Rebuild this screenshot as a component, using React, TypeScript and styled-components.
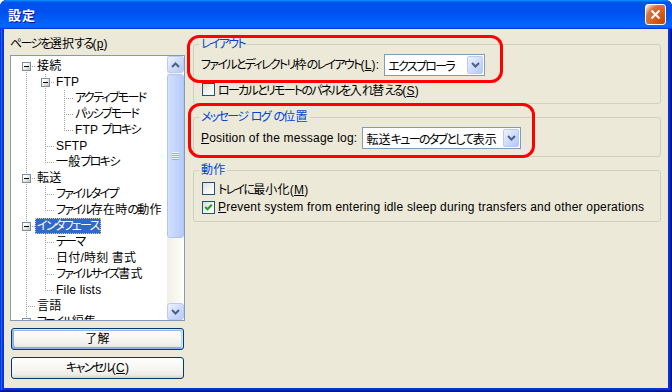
import React from "react";
import styled, { createGlobalStyle, css } from "styled-components";

const GlobalStyle = createGlobalStyle`
  * { box-sizing: border-box; }
  html, body { margin: 0; padding: 0; background: #ffffff; }
  body {
    font-family: "Liberation Sans", "Noto Sans CJK JP", sans-serif;
    font-size: 12px;
    letter-spacing: 0.2px;
    color: #000;
  }
`;

/* ---------- text helpers ---------- */

const Kana = styled.span`
  letter-spacing: -1.7px;
`;

const KANA_RUN = /([\u3040-\u30ff\u31f0-\u31ff]+)/;

function J({ children }: { children: string }) {
  return (
    <>
      {children
        .split(KANA_RUN)
        .map((part, i) => (i % 2 === 1 ? <Kana key={i}>{part}</Kana> : part))}
    </>
  );
}

const Key = styled.span`
  text-decoration: underline;
`;

/* ---------- window chrome ---------- */

const Window = styled.div`
  width: 672px;
  height: 392px;
  display: flex;
  flex-direction: column;
  background: #0831d9;
  border-radius: 7px 7px 0 0;
  overflow: hidden;
  box-shadow: inset -1px -1px #00138c, inset 1px 1px #0831d9,
    inset -2px -2px #001ea0, inset 2px 2px #166aee;
  font-feature-settings: "palt";
`;

const TitleBar = styled.div`
  height: 29px;
  flex: none;
  display: flex;
  align-items: center;
  justify-content: space-between;
  padding: 0 6px 0 8px;
  background: linear-gradient(
    180deg,
    #0997ff,
    #0053ee 8%,
    #0050ee 40%,
    #0066ff 88%,
    #0066ff 93%,
    #005bff 95%,
    #003dd7 96%,
    #003dd7
  );
`;

const Title = styled.span`
  color: #fff;
  font-weight: bold;
  font-size: 13px;
  letter-spacing: 1px;
  text-shadow: 1px 1px 0 #0f1089;
`;

const CloseButton = styled.div`
  width: 21px;
  height: 21px;
  border: 1px solid #fff;
  border-radius: 3px;
  background: radial-gradient(
    circle at 90% 90%,
    #cc4600 0%,
    #dc6527 55%,
    #cd7546 70%,
    #ffccb2 90%,
    #fff 100%
  );
  display: flex;
  align-items: center;
  justify-content: center;
`;

const Client = styled.div`
  flex: 1;
  margin: 0 4px 4px;
  background: #ece9d8;
  position: relative;
  display: flex;
  gap: 8px;
  padding: 7px 7px 0 6px;
`;

/* ---------- left pane ---------- */

const LeftPane = styled.div`
  width: 175px;
  flex: none;
  display: flex;
  flex-direction: column;
`;

const PaneLabel = styled.div`
  height: 16px;
  line-height: 16px;
  white-space: nowrap;
`;

const TreeBox = styled.div`
  margin-top: 3px;
  height: 266px;
  border: 1px solid #7f9db9;
  background: #fff;
  display: flex;
  overflow: hidden;
`;

const TreeList = styled.div`
  flex: 1;
  overflow: hidden;
  padding-top: 2px;
`;

const TreeRow = styled.div`
  height: 16px;
  display: flex;
  padding-left: 6px;
  white-space: nowrap;
`;

type Guide = "pipe" | "blank" | "tee" | "elbow" | "first";

const vDots = `repeating-linear-gradient(to bottom, #a0a0a0 0 1px, transparent 1px 2px)`;
const hDots = `repeating-linear-gradient(to right, #a0a0a0 0 1px, transparent 1px 2px)`;
const vFull = `${vDots} 9px 0 / 1px 16px no-repeat`;
const vTop = `${vDots} 9px 0 / 1px 8px no-repeat`;
const vBottom = `${vDots} 9px 8px / 1px 8px no-repeat`;
const hRight = `${hDots} 9px 8px / 11px 1px no-repeat`;

const guideBg: Record<Guide, string> = {
  pipe: vFull,
  blank: "none",
  tee: `${vFull}, ${hRight}`,
  elbow: `${vTop}, ${hRight}`,
  first: `${vBottom}, ${hRight}`,
};

const GuideCell = styled.div<{ $kind: Guide }>`
  width: 19px;
  height: 16px;
  flex: none;
  display: flex;
  background: ${(p) => guideBg[p.$kind]};
`;

const Expander = styled.div`
  width: 9px;
  height: 9px;
  margin: 4px 0 0 5px;
  border: 1px solid #7a8ead;
  background: linear-gradient(135deg, #ffffff 25%, #e6e3da 60%, #c6c1b2 100%);
  display: flex;
  align-items: center;
  justify-content: center;
  &::after {
    content: "";
    width: 5px;
    height: 1px;
    background: #000;
  }
`;

const NodeLabel = styled.span<{ $selected?: boolean }>`
  height: 16px;
  line-height: 16px;
  padding: 0 2px;
  margin-left: -1px;
  ${(p) =>
    p.$selected &&
    css`
      background: #316ac5;
      color: #fff;
      outline: 1px dotted #e8c77a;
      outline-offset: -1px;
    `}
`;

const ScrollBar = styled.div`
  width: 17px;
  flex: none;
  display: flex;
  flex-direction: column;
  background: linear-gradient(to right, #f1efe6, #fefefb);
`;

const ScrollButton = styled.div`
  height: 17px;
  flex: none;
  border: 1px solid #b7cbf5;
  border-radius: 3px;
  background: linear-gradient(135deg, #eef3fe 0%, #cfdcfc 50%, #b7cbf8 100%);
  display: flex;
  align-items: center;
  justify-content: center;
`;

const Track = styled.div`
  flex: 1;
  display: flex;
  flex-direction: column;
`;

const Thumb = styled.div`
  margin-top: 1px;
  height: 164px;
  border: 1px solid #b0c5f4;
  border-radius: 3px;
  background: linear-gradient(to right, #d3e0fd, #c4d5fc 50%, #b8cbf8);
  display: flex;
  align-items: center;
  justify-content: center;
`;

const Grip = styled.div`
  width: 7px;
  height: 8px;
  background: repeating-linear-gradient(
    to bottom,
    #eef4fe 0 1px,
    #8cb0f8 1px 2px
  );
`;

const ButtonStack = styled.div`
  margin-top: 7px;
  display: flex;
  flex-direction: column;
  gap: 7px;
  padding: 0 1px;
`;

const PushButton = styled.div<{ $default?: boolean }>`
  height: 22px;
  border: 1px solid #003c74;
  border-radius: 3px;
  background: linear-gradient(
    180deg,
    #ffffff 0%,
    #f5f4ef 60%,
    #ecebe6 85%,
    #d6d0c5 100%
  );
  display: flex;
  align-items: center;
  justify-content: center;
  line-height: 16px;
  white-space: nowrap;
  ${(p) =>
    p.$default &&
    css`
      box-shadow: inset -1px 1px #cee7ff, inset 1px 2px #98b8ea,
        inset -2px 2px #bcd4f6, inset 1px -1px #89ade4,
        inset 2px -2px #89ade4;
    `}
`;

/* ---------- right pane ---------- */

const RightPane = styled.div`
  width: 468px;
  flex: none;
  display: flex;
  flex-direction: column;
  gap: 5px;
`;

const Group = styled.fieldset<{ $bottom: number }>`
  margin: 0;
  min-width: 0;
  border: 1px solid #d0d0bf;
  border-radius: 3px;
  padding: 2px 7px ${(p) => p.$bottom}px 7px;
  display: flex;
  flex-direction: column;
`;

const Legend = styled.legend`
  color: #0046d5;
  padding: 0 2px;
  margin-left: -2px;
  line-height: 16px;
  height: 16px;
  white-space: nowrap;
`;

const FieldRow = styled.div`
  height: 22px;
  display: flex;
  align-items: center;
  gap: 5px;
  white-space: nowrap;
`;

const FieldLabel = styled.span`
  line-height: 16px;
`;

const ComboBox = styled.div<{ $width: number }>`
  width: ${(p) => p.$width}px;
  height: 22px;
  flex: none;
  border: 1px solid #7f9db9;
  background: #fff;
  display: flex;
  align-items: center;
  padding: 0 1px 0 3px;
  white-space: nowrap;
`;

const ComboText = styled.span`
  flex: 1;
  min-width: 0;
  overflow: hidden;
`;

const DropButton = styled.div`
  width: 16px;
  height: 18px;
  flex: none;
  border: 1px solid #b7cbf5;
  border-radius: 2px;
  background: linear-gradient(135deg, #eef3fe 0%, #cfdcfc 50%, #b4c8f7 100%);
  display: flex;
  align-items: center;
  justify-content: center;
`;

const CheckRow = styled.div<{ $gapTop: number }>`
  margin-top: ${(p) => p.$gapTop}px;
  height: 16px;
  display: flex;
  align-items: center;
  gap: 3px;
  white-space: nowrap;
`;

const CheckBox = styled.span`
  width: 13px;
  height: 13px;
  flex: none;
  margin-left: 1px;
  border: 1px solid #1c5180;
  background: linear-gradient(135deg, #dcdcd7 0%, #f4f4f0 55%, #ffffff 100%);
  display: flex;
  align-items: center;
  justify-content: center;
`;

/* ---------- annotation overlays ---------- */

const Annotation = styled.div<{ $l: number; $t: number; $w: number; $h: number }>`
  position: absolute;
  left: ${(p) => p.$l}px;
  top: ${(p) => p.$t}px;
  width: ${(p) => p.$w}px;
  height: ${(p) => p.$h}px;
  border: 3px solid #ff0000;
  border-radius: 12px;
  pointer-events: none;
`;

/* ---------- icons ---------- */

const Chevron = ({ up }: { up?: boolean }) => (
  <svg width="9" height="6" viewBox="0 0 9 6">
    <polyline
      points={up ? "1,5 4.5,1.5 8,5" : "1,1 4.5,4.5 8,1"}
      fill="none"
      stroke="#4d6185"
      strokeWidth="2"
    />
  </svg>
);

const CheckMark = () => (
  <svg width="9" height="9" viewBox="0 0 9 9">
    <polyline
      points="1.2,4 3.5,6.3 7.8,1.8"
      fill="none"
      stroke="#21a121"
      strokeWidth="2.2"
    />
  </svg>
);

/* ---------- tree data ---------- */

type TreeNode = {
  label: string;
  children?: TreeNode[];
  selected?: boolean;
  expandable?: boolean;
};

const tree: TreeNode[] = [
  {
    label: "接続",
    children: [
      {
        label: "FTP",
        children: [
          { label: "アクティブモード" },
          { label: "パッシブモード" },
          { label: "FTP プロキシ" },
        ],
      },
      { label: "SFTP" },
      { label: "一般プロキシ" },
    ],
  },
  {
    label: "転送",
    children: [{ label: "ファイルタイプ" }, { label: "ファイル存在時の動作" }],
  },
  {
    label: "インタフェース",
    selected: true,
    children: [
      { label: "テーマ" },
      { label: "日付/時刻 書式" },
      { label: "ファイルサイズ書式" },
      { label: "File lists" },
    ],
  },
  { label: "言語" },
  { label: "ファイル編集", expandable: true },
];

type FlatRow = {
  label: string;
  guides: Guide[];
  expander: boolean;
  selected: boolean;
};

function flatten(nodes: TreeNode[], level: number, anc: boolean[], out: FlatRow[]) {
  nodes.forEach((n, i) => {
    const last = i === nodes.length - 1;
    let own: Guide = last ? "elbow" : "tee";
    if (level === 0 && i === 0 && !last) own = "first";
    out.push({
      label: n.label,
      guides: [...anc.map((h) => (h ? "pipe" : "blank") as Guide), own],
      expander: !!n.children || !!n.expandable,
      selected: !!n.selected,
    });
    if (n.children) flatten(n.children, level + 1, [...anc, !last], out);
  });
  return out;
}

const rows = flatten(tree, 0, [], []);

export default function App() {
  return (
    <>
      <GlobalStyle />
      <Window>
        <TitleBar>
          <Title>設定</Title>
          <CloseButton>
            <svg width="11" height="11" viewBox="0 0 11 11">
              <path d="M1.5 1.5 L9.5 9.5 M9.5 1.5 L1.5 9.5" stroke="#fff" strokeWidth="2" />
            </svg>
          </CloseButton>
        </TitleBar>
        <Client>
          <LeftPane>
            <PaneLabel>
              <J>ページを選択する</J>(<Key>p</Key>)
            </PaneLabel>
            <TreeBox>
              <TreeList>
                {rows.map((r, i) => (
                  <TreeRow key={i}>
                    {r.guides.map((g, j) => (
                      <GuideCell key={j} $kind={g}>
                        {j === r.guides.length - 1 && r.expander && <Expander />}
                      </GuideCell>
                    ))}
                    <NodeLabel $selected={r.selected}>
                      <J>{r.label}</J>
                    </NodeLabel>
                  </TreeRow>
                ))}
              </TreeList>
              <ScrollBar>
                <ScrollButton>
                  <Chevron up />
                </ScrollButton>
                <Track>
                  <Thumb>
                    <Grip />
                  </Thumb>
                </Track>
                <ScrollButton>
                  <Chevron />
                </ScrollButton>
              </ScrollBar>
            </TreeBox>
            <ButtonStack>
              <PushButton $default>了解</PushButton>
              <PushButton>
                <J>キャンセル</J>(<Key>C</Key>)
              </PushButton>
            </ButtonStack>
          </LeftPane>

          <RightPane>
            <Group $bottom={6}>
              <Legend>
                <J>レイアウト</J>
              </Legend>
              <FieldRow>
                <FieldLabel>
                  <J>ファイルとディレクトリ枠のレイアウト</J>(<Key>L</Key>):
                </FieldLabel>
                <ComboBox $width={101}>
                  <ComboText>
                    <J>エクスプローラ</J>
                  </ComboText>
                  <DropButton>
                    <Chevron />
                  </DropButton>
                </ComboBox>
              </FieldRow>
              <CheckRow $gapTop={5}>
                <CheckBox />
                <span>
                  <J>ローカルとリモートのパネルを入れ替える</J>(<Key>S</Key>)
                </span>
              </CheckRow>
            </Group>

            <Group $bottom={7}>
              <Legend>
                <J>メッセージ ログ の位置</J>
              </Legend>
              <FieldRow>
                <FieldLabel>
                  <Key>P</Key>osition of the message log:
                </FieldLabel>
                <ComboBox $width={159}>
                  <ComboText>
                    <J>転送キューのタブとして表示</J>
                  </ComboText>
                  <DropButton>
                    <Chevron />
                  </DropButton>
                </ComboBox>
              </FieldRow>
            </Group>

            <Group $bottom={6}>
              <Legend>動作</Legend>
              <CheckRow $gapTop={0}>
                <CheckBox />
                <span>
                  <J>トレイに最小化</J>(<Key>M</Key>)
                </span>
              </CheckRow>
              <CheckRow $gapTop={3}>
                <CheckBox>
                  <CheckMark />
                </CheckBox>
                <span>
                  <Key>P</Key>revent system from entering idle sleep during transfers and other operations
                </span>
              </CheckRow>
            </Group>
          </RightPane>

          <Annotation $l={183} $t={6} $w={316} $h={48} />
          <Annotation $l={184} $t={74} $w={347} $h={55} />
        </Client>
      </Window>
    </>
  );
}
